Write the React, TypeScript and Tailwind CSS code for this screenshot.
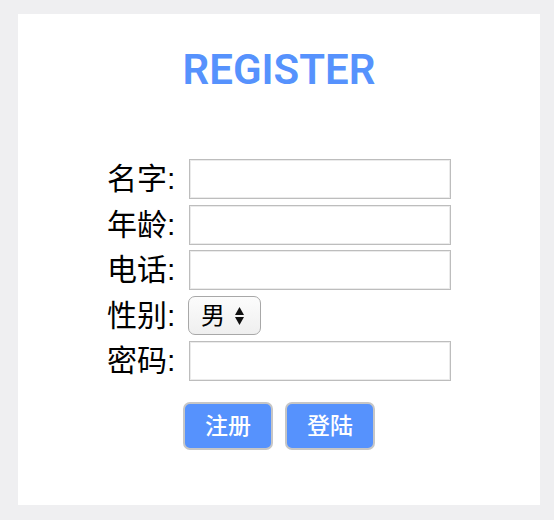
import React from "react";

const fields = ["名字", "年龄", "电话", "性别", "密码"];

export default function App() {
  return (
    <div
      className="min-h-[520px] w-[554px] bg-[#efeff1] pt-[14px] pl-[18px]"
      style={{ fontFamily: '"Liberation Sans", "Noto Sans CJK SC", sans-serif' }}
    >
      <div className="flex h-[491px] w-[522px] flex-col items-center bg-white">
        <h1
          className="mt-[32px] text-[42px] font-semibold leading-[48px] text-[#5692fd]"
          style={{ fontFamily: 'Roboto, "Liberation Sans", sans-serif' }}
        >
          REGISTER
        </h1>
        <form className="mt-[65px] flex flex-col gap-[5.5px]" onSubmit={(e) => e.preventDefault()}>
          {fields.map((f) => (
            <div key={f} className="flex h-[40px] items-center">
              <label className="w-[82px] text-[30px] leading-[40px] text-black">
                {f}:
              </label>
              {f === "性别" ? (
                <div className="relative -ml-[1px] h-[39px] w-[73px]">
                  <select className="h-full w-full appearance-none rounded-[7px] border-[1.5px] border-[#a8a8a8] bg-gradient-to-b from-[#fcfcfc] to-[#efefef] pl-[12px] text-[24px] text-black outline-none">
                    <option>男</option>
                    <option>女</option>
                  </select>
                  <svg
                    className="pointer-events-none absolute left-[47px] top-[11px]"
                    width="9"
                    height="18"
                    viewBox="0 0 9 18"
                  >
                    <path d="M4.5 0 L9 8 L0 8 Z" fill="#111" />
                    <path d="M0 10 L9 10 L4.5 18 Z" fill="#111" />
                  </svg>
                </div>
              ) : (
                <input
                  type={f === "密码" ? "password" : "text"}
                  className="h-[40px] w-[262px] border border-[#bdbdbd] bg-white px-1 shadow-[inset_0_0_0_1px_#ebebeb] outline-none"
                />
              )}
            </div>
          ))}
        </form>
        <div className="mt-[21px] flex gap-[12px]">
          <button className="h-[48px] w-[90px] rounded-[7px] border-2 border-[#c6c6c6] bg-[#5692fd] text-[23px] font-medium text-white">
            注册
          </button>
          <button className="h-[48px] w-[90px] rounded-[7px] border-2 border-[#c6c6c6] bg-[#5692fd] text-[23px] font-medium text-white">
            登陆
          </button>
        </div>
      </div>
    </div>
  );
}
